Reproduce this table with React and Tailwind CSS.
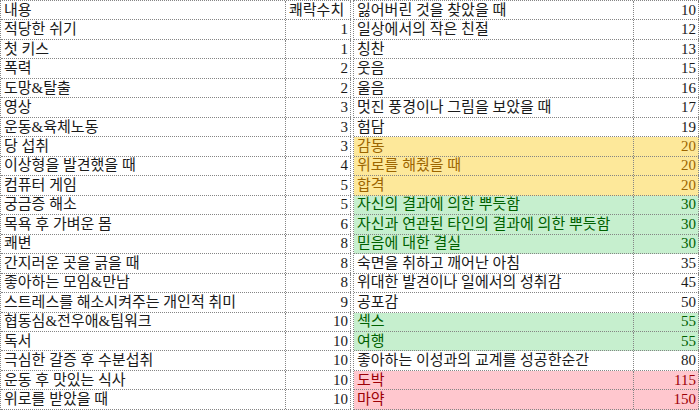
import clsx from 'clsx';

const LEFT = [
  ['내용', '쾌락수치', 'header'],
  ['적당한 쉬기', 1],
  ['첫 키스', 1],
  ['폭력', 2],
  ['도망&탈출', 2],
  ['영상', 3],
  ['운동&육체노동', 3],
  ['당 섭취', 3],
  ['이상형을 발견했을 때', 4],
  ['컴퓨터 게임', 5],
  ['궁금증 해소', 5],
  ['목욕 후 가벼운 몸', 6],
  ['쾌변', 8],
  ['간지러운 곳을 긁을 때', 8],
  ['좋아하는 모임&만남', 8],
  ['스트레스를 해소시켜주는 개인적 취미', 9],
  ['협동심&전우애&팀워크', 10],
  ['독서', 10],
  ['극심한 갈증 후 수분섭취', 10],
  ['운동 후 맛있는 식사', 10],
  ['위로를 받았을 때', 10],
];

const RIGHT = [
  ['잃어버린 것을 찾았을 때', 10],
  ['일상에서의 작은 친절', 12],
  ['칭찬', 13],
  ['웃음', 15],
  ['울음', 16],
  ['멋진 풍경이나 그림을 보았을 때', 17],
  ['험담', 19],
  ['감동', 20, 'neutral'],
  ['위로를 해줬을 때', 20, 'neutral'],
  ['합격', 20, 'neutral'],
  ['자신의 결과에 의한 뿌듯함', 30, 'good'],
  ['자신과 연관된 타인의 결과에 의한 뿌듯함', 30, 'good'],
  ['믿음에 대한 결실', 30, 'good'],
  ['숙면을 취하고 깨어난 아침', 35],
  ['위대한 발견이나 일에서의 성취감', 45],
  ['공포감', 50],
  ['섹스', 55, 'good'],
  ['여행', 55, 'good'],
  ['좋아하는 이성과의 교계를 성공한순간', 80],
  ['도박', 115, 'bad'],
  ['마약', 150, 'bad'],
];

// excel-ish conditional formatting styles
const TONES = {
  neutral: 'bg-[#fde89a] text-[#9c6500]',
  good: 'bg-[#c6efce] text-[#006100]',
  bad: 'bg-[#ffc7ce] text-[#9c0006]',
};

function Sheet({ rows, nameWidth }) {
  return (
    <div className="flex flex-col border-l border-t border-dotted border-[#858585]">
      {rows.map(([name, value, tone]) => (
        <div
          key={name}
          className={clsx(
            'flex h-[19.5px] items-center border-b border-dotted border-[#858585] leading-none',
            TONES[tone] || 'bg-white text-[#1a1a1a]'
          )}
        >
          <div
            className={clsx(
              'flex h-full items-center overflow-hidden whitespace-nowrap border-r border-dotted border-[#858585] pl-[3px]',
              nameWidth
            )}
          >
            {name}
          </div>
          <div
            className={clsx(
              'flex h-full w-[65px] items-center border-r border-dotted border-[#858585]',
              tone === 'header' ? 'justify-start pl-[3px]' : 'justify-end pr-[2px]'
            )}
          >
            {value}
          </div>
        </div>
      ))}
    </div>
  );
}

export default function App() {
  return (
    <div
      className="flex h-[410px] w-[700px] gap-[2px] overflow-hidden bg-white text-[15px]"
      style={{ fontFamily: '"Liberation Serif", "Noto Sans CJK KR", serif' }}
    >
      <Sheet rows={LEFT} nameWidth="w-[285px]" />
      <Sheet rows={RIGHT} nameWidth="w-[280px]" />
    </div>
  );
}
